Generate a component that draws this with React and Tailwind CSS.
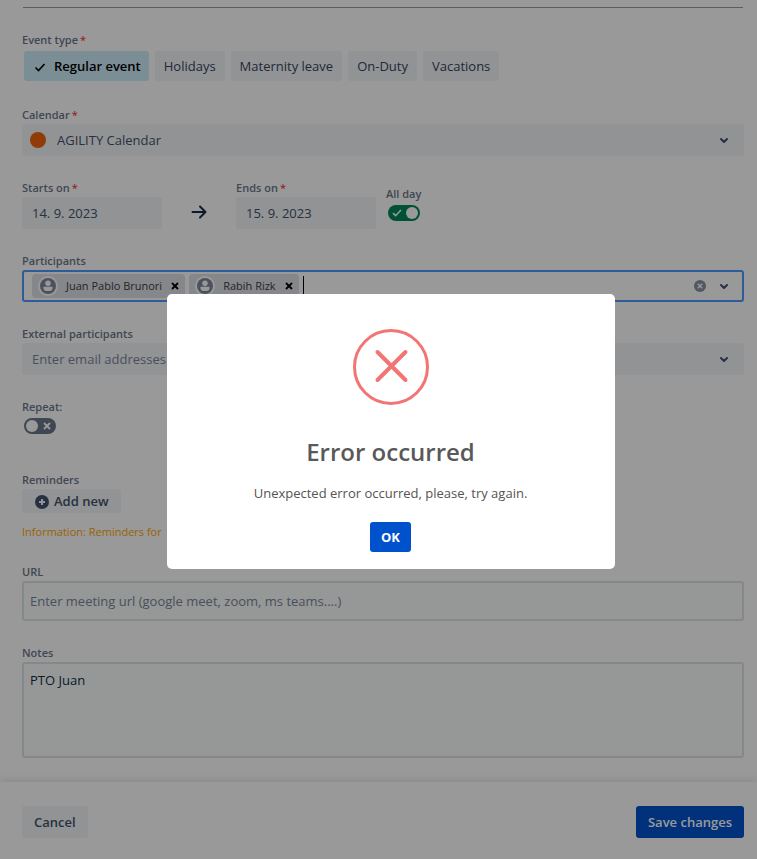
import React, { useState } from 'react';

const eventTypes = ['Regular event', 'Holidays', 'Maternity leave', 'On-Duty', 'Vacations'];

const participants = ['Juan Pablo Brunori', 'Rabih Rizk'];

const ChevronIcon = () => (
  <svg className="size-4 shrink-0 text-[#42526e]" viewBox="0 0 16 16" fill="none" stroke="currentColor" strokeWidth="2" strokeLinecap="round" strokeLinejoin="round" aria-hidden="true">
    <path d="M5 7l3 3 3-3" />
  </svg>
);

const CrossIcon = ({ className }) => (
  <svg className={className} viewBox="0 0 8 8" fill="none" stroke="currentColor" strokeWidth="1.8" aria-hidden="true">
    <path d="M1 1l6 6M7 1L1 7" />
  </svg>
);

const FieldLabel = ({ htmlFor, required, children }) => (
  <label htmlFor={htmlFor} className="flex h-[17px] text-[11px] leading-4 font-semibold text-[#6b778c]">
    {children}
    {required && <span className="pl-0.5 font-normal text-[#f5222d]">*</span>}
  </label>
);

/**
 * On/off switch backed by a checkbox
 */
const Toggle = ({ id, defaultChecked }) => (
  <label htmlFor={id} className="m-0.5 flex h-4 w-8 cursor-pointer">
    <input id={id} type="checkbox" defaultChecked={defaultChecked} className="peer sr-only" />
    <span className="hidden h-4 w-8 items-center justify-between rounded-full bg-[#00875a] pr-0.5 pl-1 text-white peer-checked:flex">
      <svg className="size-2.5" viewBox="0 0 10 10" fill="none" stroke="currentColor" strokeWidth="1.6" aria-hidden="true">
        <path d="M1 5.2l2.6 2.5L9 2" />
      </svg>
      <span className="size-3 rounded-full bg-white"></span>
    </span>
    <span className="flex h-4 w-8 items-center justify-between rounded-full bg-[#6b778c] pr-[5px] pl-0.5 text-white peer-checked:hidden">
      <span className="size-3 rounded-full bg-white"></span>
      <CrossIcon className="size-2" />
    </span>
  </label>
);

const Participant = ({ name }) => (
  <span className="flex h-6 items-center rounded-sm bg-[#dfe1e6] px-1.5 text-[11px] text-[#3d3d3d]">
    <svg className="mr-2 size-5 shrink-0" viewBox="0 0 20 20" aria-hidden="true">
      <circle cx="10" cy="10" r="10" fill="#fff" />
      <circle cx="10" cy="10" r="8" fill="#7f899b" />
      <circle cx="10" cy="7.2" r="2.7" fill="#fff" />
      <path d="M5.5 10.8h9v1.2a3 3 0 0 1-3 3h-3a3 3 0 0 1-3-3z" fill="#fff" />
    </svg>
    {name}
    <button type="button" aria-label={`Remove ${name}`} className="ml-[9px] text-black">
      <CrossIcon className="size-2" />
    </button>
  </span>
);

const ErrorDialog = ({ onClose }) => (
  <div className="fixed inset-0 flex items-center justify-center bg-black/40 pt-1 pl-6">
    <div role="alertdialog" aria-labelledby="error-title" aria-describedby="error-text" className="flex w-md flex-col items-center rounded-[5px] bg-white px-5 pt-[35px] pb-[17px]">
      <svg className="size-19" viewBox="0 0 76 76" fill="none" stroke="#f27474" aria-hidden="true">
        <circle cx="38" cy="38" r="36.5" strokeWidth="3" />
        <path d="M24.5 23l28 28M52.5 23l-28 28" strokeWidth="4" strokeLinecap="round" />
      </svg>
      <h2 id="error-title" className="mt-[31px] text-2xl leading-8 font-semibold text-[#595959]">Error occurred</h2>
      <p id="error-text" className="mt-[15px] text-[13px] leading-5 text-[#545454]">Unexpected error occurred, please, try again.</p>
      <button type="button" onClick={onClose} className="mt-[19px] h-[30px] rounded-[3px] bg-[#0052cc] px-[11px] pt-px text-[13px] font-bold text-white">
        OK
      </button>
    </div>
  </div>
);

const App = () => {
  const [selectedType, setSelectedType] = useState('Regular event');
  const [showError, setShowError] = useState(true);

  return (
    <div className="flex min-h-screen flex-col bg-white font-['Open_Sans',sans-serif] text-[13px] text-[#172b4d]">
      <form className="flex flex-col gap-6 pt-[7px] pr-[13px] pb-6 pl-[22px]">
        <hr className="mx-px border-[#999ca3]" />

        {/* Event type */}
        <div>
          <FieldLabel required>Event type</FieldLabel>
          <div className="flex flex-wrap gap-1.5 p-0.5">
            {eventTypes.map((type) => (
              <button
                key={type}
                type="button"
                aria-pressed={type === selectedType}
                onClick={() => setSelectedType(type)}
                className={
                  type === selectedType
                    ? 'flex h-[30px] items-center rounded-[3px] bg-[#cdecf8] px-2 pt-px font-semibold text-black'
                    : 'flex h-[30px] items-center rounded-[3px] bg-[#f4f5f7] px-[9px] pt-px text-[#344563]'
                }
              >
                {type === selectedType && (
                  <svg className="mr-1.5 size-4" viewBox="0 0 16 16" fill="none" stroke="currentColor" strokeWidth="1.6" aria-hidden="true">
                    <path d="M3.5 8.5l3 3 6-6.5" />
                  </svg>
                )}
                {type}
              </button>
            ))}
          </div>
        </div>

        {/* Calendar */}
        <div>
          <FieldLabel htmlFor="calendar" required>Calendar</FieldLabel>
          <div className="flex h-8 items-center rounded-[3px] bg-[#f4f5f7] pr-3 pl-2">
            <span className="size-4 shrink-0 rounded-full bg-[#f2630f]"></span>
            <select id="calendar" className="min-w-0 flex-1 appearance-none pt-px pl-[11px] text-[#42526e] outline-none">
              <option>AGILITY Calendar</option>
            </select>
            <ChevronIcon />
          </div>
        </div>

        {/* Dates */}
        <div className="flex">
          <div>
            <FieldLabel htmlFor="starts" required>Starts on</FieldLabel>
            <input id="starts" type="text" defaultValue="14. 9. 2023" className="h-8 w-[140px] rounded-[3px] bg-[#f4f5f7] px-2.5 text-[#42526e]" />
          </div>
          <div className="flex w-[74px] items-end justify-center pb-2">
            <svg className="size-[18px]" viewBox="0 0 18 18" fill="none" stroke="#172b4d" strokeWidth="2" strokeLinecap="round" strokeLinejoin="round" aria-hidden="true">
              <path d="M2.5 9h13M10 3.5L15.5 9 10 14.5" />
            </svg>
          </div>
          <div>
            <FieldLabel htmlFor="ends" required>Ends on</FieldLabel>
            <input id="ends" type="text" defaultValue="15. 9. 2023" className="h-8 w-[140px] rounded-[3px] bg-[#f4f5f7] px-2.5 text-[#42526e]" />
          </div>
          <div className="ml-2.5 pt-1.5">
            <FieldLabel htmlFor="all-day">All day</FieldLabel>
            <Toggle id="all-day" defaultChecked />
          </div>
        </div>

        {/* Participants */}
        <div>
          <FieldLabel htmlFor="participants">Participants</FieldLabel>
          <div className="flex h-8 items-center gap-1 rounded-[3px] border-2 border-[#4c9aff] pr-2.5 pl-2">
            {participants.map((name) => (
              <Participant key={name} name={name} />
            ))}
            <span className="h-5 w-px bg-black"></span>
            <input id="participants" type="text" className="min-w-0 flex-1 outline-none" />
            <button type="button" aria-label="Clear participants" className="mr-1.5 flex size-3 items-center justify-center rounded-full bg-[#8993a4] text-white">
              <CrossIcon className="size-1.5" />
            </button>
            <ChevronIcon />
          </div>
        </div>

        {/* External participants */}
        <div>
          <FieldLabel htmlFor="external">External participants</FieldLabel>
          <div className="flex h-8 items-center rounded-[3px] bg-[#f4f5f7] pr-3 pl-2.5">
            <input id="external" type="text" placeholder="Enter email addresses..." className="min-w-0 flex-1 pt-px outline-none placeholder:text-[#7a869a]" />
            <ChevronIcon />
          </div>
        </div>

        {/* Repeat */}
        <div className="pb-3">
          <FieldLabel htmlFor="repeat">Repeat:</FieldLabel>
          <Toggle id="repeat" />
        </div>

        {/* Reminders */}
        <div>
          <h3 className="h-[17px] text-[11px] leading-4 font-semibold text-[#6b778c]">Reminders</h3>
          <button type="button" className="flex h-6 items-center gap-1 rounded-[3px] bg-[#f4f5f7] px-3 pt-px font-semibold text-[#42526e]">
            <svg className="size-4" viewBox="0 0 16 16" aria-hidden="true">
              <circle cx="8" cy="8" r="7" fill="currentColor" />
              <path d="M8 5v6M5 8h6" stroke="#f4f5f7" strokeWidth="2" />
            </svg>
            Add new
          </button>
          <p className="mt-[11px] truncate text-[11px] leading-4 text-[#ffa500]">Information: Reminders for</p>
        </div>

        {/* URL */}
        <div>
          <FieldLabel htmlFor="url">URL</FieldLabel>
          <input id="url" type="text" placeholder="Enter meeting url (google meet, zoom, ms teams....)" className="block h-10 w-full rounded-[3px] border-2 border-[#dfe1e6] bg-[#f9fdfa] px-1.5 placeholder:text-[#7a869a]" />
        </div>

        {/* Notes */}
        <div>
          <FieldLabel htmlFor="notes">Notes</FieldLabel>
          <textarea id="notes" defaultValue="PTO Juan" className="block h-24 w-full resize-none rounded-[3px] border-2 border-[#dfe1e6] bg-[#f9fdfa] px-1.5 py-1.5 leading-5" />
        </div>
      </form>

      {/* Actions */}
      <div className="flex flex-1 items-start justify-between pt-6 pr-[13px] pl-[22px] shadow-[0_0_10px_rgba(0,0,0,0.15)]">
        <button type="button" className="h-8 rounded-[3px] bg-[#f4f5f7] px-3 pt-px font-semibold text-[#42526e]">Cancel</button>
        <button type="submit" className="h-8 rounded-[3px] bg-[#0052cc] px-3 pt-px font-semibold text-white">Save changes</button>
      </div>

      {showError && <ErrorDialog onClose={() => setShowError(false)} />}
    </div>
  );
};

export default App;
